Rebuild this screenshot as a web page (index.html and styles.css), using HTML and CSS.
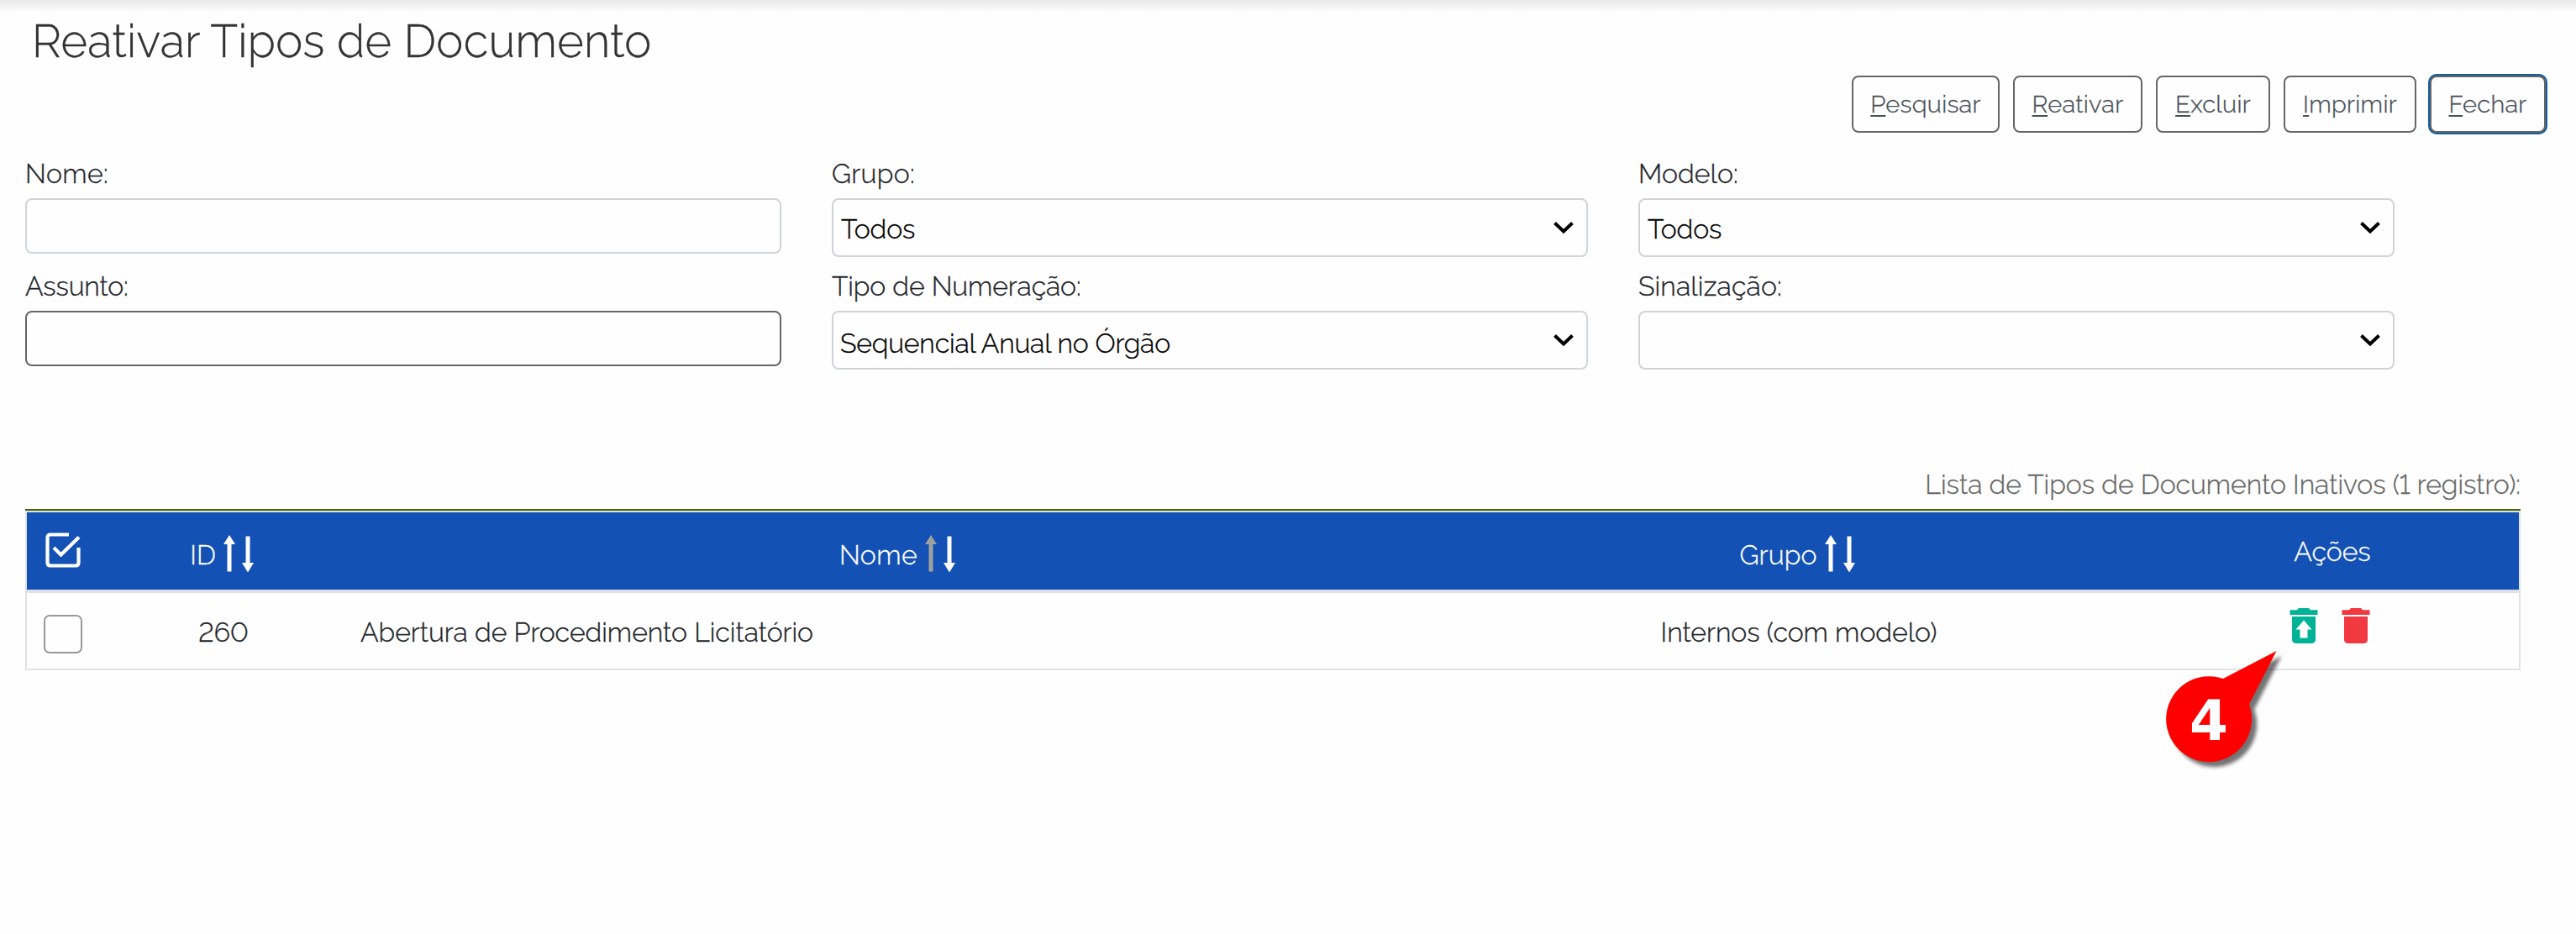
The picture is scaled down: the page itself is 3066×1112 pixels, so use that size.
FILE: index.html
```
<!DOCTYPE html>
<html lang="pt-BR">
<head>
<meta charset="utf-8">
<title>Reativar Tipos de Documento</title>
<link rel="stylesheet" href="styles.css">
</head>
<body>
<svg width="0" height="0" class="defs" aria-hidden="true">
  <symbol id="up" viewBox="0 0 14 44"><path d="M7 0L14 11H9.5V43.5H4.5V11H0Z" fill="currentColor"/></symbol>
  <symbol id="down" viewBox="0 0 14 44"><path d="M7 44.500L0 33H4.500V1.500H9.500V33H14Z" fill="currentColor"/></symbol>
  <symbol id="chevron" viewBox="0 0 26 16"><path d="M2.500 2.500L13 12.500L23.500 2.500" fill="none" stroke="#000" stroke-width="4"/></symbol>
</svg>
<main class="page">
  <h1 class="title">Reativar Tipos de Documento</h1>
  <div class="actions">
    <button class="btn pesquisar"><span><u>P</u>esquisar</span></button>
    <button class="btn reativar"><span><u>R</u>eativar</span></button>
    <button class="btn excluir"><span><u>E</u>xcluir</span></button>
    <button class="btn imprimir"><span><u>I</u>mprimir</span></button>
    <button class="btn fechar"><span><u>F</u>echar</span></button>
  </div>
  <form class="filters">
    <div class="field"><label class="l-nome">Nome:</label><div class="input"></div></div>
    <div class="field"><label class="l-grupo">Grupo:</label><div class="select"><span class="todos">Todos</span><svg class="chevron"><use href="#chevron"/></svg></div></div>
    <div class="field"><label class="l-modelo">Modelo:</label><div class="select"><span class="todos">Todos</span><svg class="chevron"><use href="#chevron"/></svg></div></div>
    <div class="field"><label class="l-assunto">Assunto:</label><div class="input strong"></div></div>
    <div class="field"><label class="l-tipo">Tipo de Numeração:</label><div class="select low"><span class="seq">Sequencial Anual no Órgão</span><svg class="chevron"><use href="#chevron"/></svg></div></div>
    <div class="field"><label class="l-sinal">Sinalização:</label><div class="select"><span></span><svg class="chevron"><use href="#chevron"/></svg></div></div>
  </form>
  <div class="caption">Lista de Tipos de Documento Inativos (1 registro):</div>
  <div class="table">
    <div class="row head">
      <div class="cell mark">
        <svg class="check-all" viewBox="0 0 42 42" fill="none" stroke="#fff" stroke-width="4.200"><path d="M28 2.500H6Q2.500 2.500 2.500 6V36Q2.500 39.500 6 39.500H36Q39.500 39.500 39.500 36V18"/><path d="M10 18L18.500 26.500L40 5.500"/></svg>
      </div>
      <div class="cell sort"><span class="h-id">ID</span><span class="arrows"><svg><use href="#up"/></svg><svg><use href="#down"/></svg></span></div>
      <div class="cell sort"><span class="h-nome">Nome</span><span class="arrows"><svg class="active"><use href="#up"/></svg><svg><use href="#down"/></svg></span></div>
      <div class="cell sort"><span class="h-grupo">Grupo</span><span class="arrows"><svg><use href="#up"/></svg><svg><use href="#down"/></svg></span></div>
      <div class="cell h-acoes"><span>Ações</span></div>
    </div>
    <div class="row body">
      <div class="cell mark"><span class="checkbox"></span></div>
      <div class="cell text c-id">260</div>
      <div class="cell text c-nome">Abertura de Procedimento Licitatório</div>
      <div class="cell text">Internos (com modelo)</div>
      <div class="cell icons">
        <svg viewBox="0 0 34 42" fill="#00b397"><path d="M11 0H23L25 2.300H33.500V8H.500V2.300H9Z"/><path fill-rule="evenodd" d="M3 10H31V37Q31 42 26 42H8Q3 42 3 37ZM17 14.500L7.500 25.500H12.500V35.500H21.500V25.500H26.500Z"/></svg>
        <svg viewBox="0 0 34 42" fill="#f23840"><path d="M11 0H23L25 2.300H33.500V8H.500V2.300H9Z"/><path d="M3 10H31V37Q31 42 26 42H8Q3 42 3 37Z"/></svg>
      </div>
    </div>
  </div>
</main>
<div class="callout">
  <svg viewBox="0 0 150 150"><path d="M131.500 5L68 38A51 51 0 1 0 99 68.500Z" fill="#f00"/></svg>
  <span>4</span>
</div>
</body>
</html>
```
FILE: styles.css
```
* { box-sizing: border-box; }
body {
  margin: 0;
  height: 1112px;
  overflow: hidden;
  position: relative;
  background: linear-gradient(#e7e7e7, #ececec 3px, #fefefe 15px);
  font: 300 32px/40px Raleway, Lato, "Open Sans", sans-serif;
  font-variant-numeric: lining-nums;
  color: #212529;
  -webkit-text-stroke: .35px currentColor;
}
.defs { position: absolute; }
.page { padding: 18px 36px 0 30px; }

.title {
  margin: 0 0 10px 8px;
  font-size: 54px;
  line-height: 62px;
  font-weight: 300;
  letter-spacing: .34px;
  color: #333;
}

.actions { display: flex; justify-content: flex-end; gap: 16px; height: 68px; }
.btn {
  padding: 0;
  border: 2px solid #666;
  border-radius: 8px;
  background: #fefefe;
  color: #495057;
  font: inherit;
  font-size: 29px;
  line-height: 36px;
  letter-spacing: .3px;
  -webkit-text-stroke: inherit;
}
.btn u { text-decoration-thickness: 2px; text-underline-offset: 3px; }
.pesquisar { width: 176px; }
.reativar { width: 154px; }
.excluir { width: 136px; }
.imprimir { width: 158px; }
.fechar { width: 138px; box-shadow: 0 0 0 2px #155f9f; }

.filters {
  display: grid;
  grid-template-columns: repeat(3, 900px);
  grid-template-rows: 134px 119px;
  column-gap: 60px;
  margin-top: 29px;
}
.field { display: flex; flex-direction: column; gap: 9px; }
.input, .select {
  height: 66px;
  border: 2px solid #ced4da;
  border-radius: 8px;
}
.input.strong { border-color: #666; }
.select {
  height: 70px;
  display: flex;
  align-items: center;
  justify-content: space-between;
  padding: 0 14px 0 8px;
  color: #000;
}
.select span { padding-top: 4px; }
.select.low span { padding-top: 8px; }
.chevron { width: 26px; height: 16px; }
.l-nome { letter-spacing: .41px; }
.l-grupo { letter-spacing: .37px; }
.l-assunto { letter-spacing: -.13px; }
.l-modelo { letter-spacing: .1px; }
.l-tipo { letter-spacing: -.08px; }
.l-sinal { letter-spacing: .19px; }
.todos { letter-spacing: -.09px; padding-left: 1px; }
.seq { letter-spacing: -.14px; }

.caption {
  margin-top: 117px;
  width: 2970px;
  text-align: right;
  color: #666;
}

.table {
  width: 2970px;
  margin-top: 9px;
  border-top: 2px solid #466800;
}
.row {
  display: grid;
  grid-template-columns: 88px 292px 1316px 826px 444px;
  border: 2px solid #dee2e6;
}
.head { height: 96px; background: #1351b4; color: #fff; }
.body { height: 94px; border-color: #e1e2e4; border-top-color: #dee2e6; }
.cell { display: flex; align-items: center; justify-content: center; }
.text { padding-top: 4px; }
.mark { justify-content: flex-start; }
.check-all { width: 42px; height: 42px; margin: 0 0 2px 22px; }
.checkbox {
  width: 46px;
  height: 46px;
  margin: 8px 0 0 20px;
  border: 2px solid #999;
  border-radius: 7px;
}
.sort { gap: 9px; padding: 6px 4px 0 0; }
.sort > span:first-child { padding-top: 4px; }
.arrows { display: flex; gap: 8px; }
.arrows svg { width: 14px; height: 44px; }
.arrows .active { color: #a0a0a0; }
.h-nome { letter-spacing: .43px; }
.h-grupo { letter-spacing: .19px; }
.h-acoes { padding-top: 2px; }
.c-nome { justify-content: flex-start; padding-left: 17px; }
.icons { gap: 28px; padding: 0 7px 12px 0; }
.icons svg { width: 34px; height: 42px; }

.callout {
  position: absolute;
  left: 2578px;
  top: 770px;
  width: 150px;
  height: 150px;
}
.callout svg { width: 150px; height: 150px; overflow: visible; filter: drop-shadow(6px 6px 2px rgba(0, 0, 0, .55)); }
.callout span {
  position: absolute;
  left: 0;
  top: 39px;
  width: 102px;
  text-align: center;
  font: 700 66px/100px "DejaVu Sans", sans-serif;
  color: #fff;
  -webkit-text-stroke: 0;
}
```
